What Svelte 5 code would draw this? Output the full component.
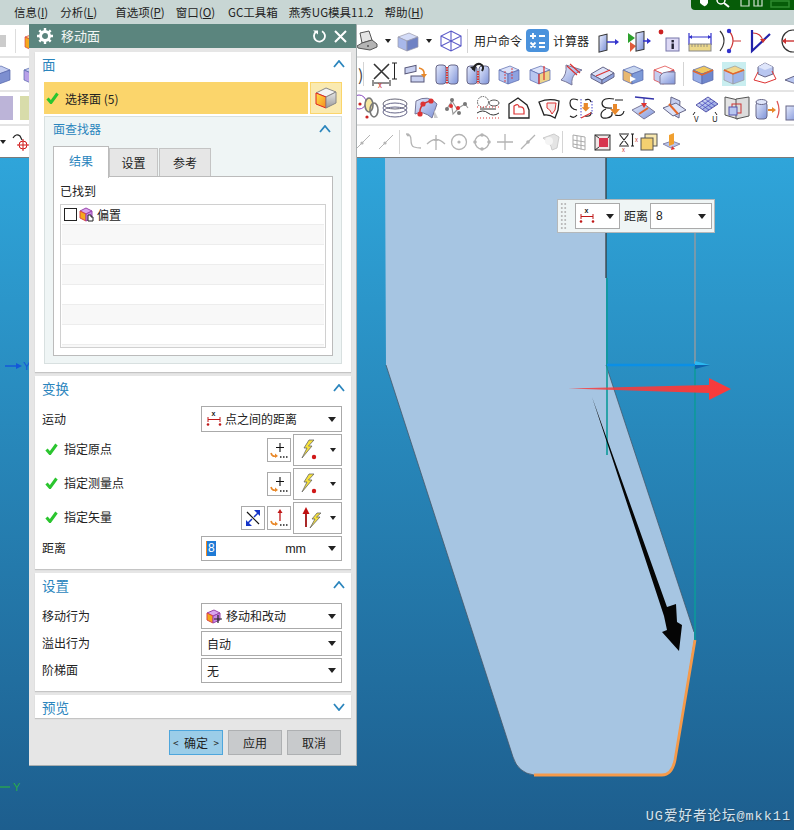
<script>
  const box = (l, t, r, s = '#5566aa') =>
    `<polygon points="2,8 13,4 22,8 11,12" fill="${t}" stroke="${s}" stroke-width=".7"/><polygon points="2,8 11,12 11,22 2,18" fill="${l}" stroke="${s}" stroke-width=".7"/><polygon points="11,12 22,8 22,18 11,22" fill="${r}" stroke="${s}" stroke-width=".7"/>`;
  const row1 = [
    `<rect x="3" y="5" width="8" height="16" fill="url(#gb)" stroke="#333" transform="skewY(-15) translate(0 3)"/><path d="M11 13h10" stroke="#33c" stroke-width="1.5"/><path d="M23 13l-4-3v6z" fill="#33c"/>`,
    `<path d="M1 4l7 5-7 5z" fill="#2ca02c"/><path d="M3 13l6 4-6 6z" fill="#e05a3a"/><rect x="9" y="3" width="8" height="18" fill="url(#gb)" stroke="#333" transform="skewY(-12) translate(0 3)"/><path d="M16 12h7" stroke="#33c" stroke-width="1.5"/><path d="M24 12l-4-3v6z" fill="#33c"/>`,
    `<circle cx="4" cy="3" r="2.4" fill="#c22"/><rect x="9" y="9" width="13" height="13" fill="#dcd8f4" stroke="#77a"/><rect x="14.5" y="11" width="2.4" height="2.4" fill="#223"/><rect x="14.5" y="14.5" width="2.4" height="5.5" fill="#223"/>`,
    `<path d="M1 4v12M23 4v12M1 8h22" stroke="#33c" stroke-width="1.2"/><path d="M1 8l3-2v4zM23 8l-3-2v4z" fill="#33c"/><rect x="1" y="15" width="22" height="7" fill="#ecd88a" stroke="#888"/><path d="M4 15v3M7 15v3M10 15v3M13 15v3M16 15v3M19 15v3" stroke="#777" stroke-width=".7"/>`,
    `<path d="M2 2q8 9 0 20" fill="none" stroke="#333" stroke-width="1.2"/><path d="M11 2q8 9 0 20" fill="none" stroke="#c33" stroke-width="1.2"/><circle cx="11" cy="2" r="2.2" fill="#33c"/><circle cx="11" cy="22" r="2.2" fill="#33c"/><path d="M15 12h8" stroke="#c33"/>`,
    `<path d="M3 1v21L21 5" fill="none" stroke="#22a" stroke-width="2.2"/><path d="M4 4q8 0 10 8" fill="none" stroke="#c33" stroke-width="1.2"/><path d="M14 14l-3-4h6z" fill="#c33"/>`,
    `<circle cx="14" cy="12" r="11" fill="none" stroke="#333" stroke-width="1.2"/><path d="M4 12h12" stroke="#c33" stroke-width="1.4"/><path d="M3 12l4-3v6z" fill="#c33"/>`
  ];
  const row2 = [
    `<rect x="1" y="3" width="11" height="6" fill="#c8d0f0" stroke="#557" transform="skewY(-12) translate(0 3)"/><rect x="7" y="14" width="13" height="6" fill="#c8d0f0" stroke="#557"/><path d="M15 6q6 1 5 7" fill="none" stroke="#e8882a" stroke-width="1.6"/><path d="M17 12h6l-3 4z" fill="#e8882a"/>`,
    `<rect x="1" y="3" width="10" height="19" rx="3" fill="url(#gb)" stroke="#668"/><rect x="13" y="3" width="10" height="19" rx="3" fill="url(#gb)" stroke="#668"/><path d="M12 5v17" stroke="#d33" stroke-width="2" stroke-dasharray="1.5 1"/>`,
    `<rect x="1" y="4" width="10" height="18" rx="3" fill="url(#gb)" stroke="#668"/><rect x="13" y="4" width="10" height="18" rx="3" fill="url(#gb)" stroke="#668"/><path d="M12 9v13" stroke="#d33" stroke-width="2" stroke-dasharray="1.5 1"/><path d="M7 8q2-7 7-6 5 2 2 7" fill="none" stroke="#222" stroke-width="2"/><path d="M4 5l6-1-1 6z" fill="#222"/>`,
    box('#b8c6f0', '#dce3fa', '#8ea2e0') + `<path d="M8 9v12M15 6v12" stroke="#d33" stroke-width=".9" stroke-dasharray="2 1"/>`,
    box('#b8c6f0', '#dce3fa', '#ecd48a') + `<path d="M11 12v10M16 4v14" stroke="#d33" stroke-width="1.2"/>`,
    `<path d="M7 3l16 5-7 4q-4 4-3 11Q6 19 2 18q6-5 5-15z" fill="url(#gb)" stroke="#779"/><path d="M8 4l10 9M11 2l10 9" stroke="#d33" stroke-width="1.2"/>`,
    `<polygon points="1,12 13,5 24,11 12,18" fill="#dde3f8" stroke="#668"/><polygon points="1,12 12,18 12,22 1,16" fill="#a8b8e8" stroke="#668"/><polygon points="12,18 24,11 24,15 12,22" fill="#8ea2dd" stroke="#668"/><path d="M6 14l14-6" stroke="#d33" stroke-width="1.2"/>`,
    box('#e8b870', '#c8d6f0', '#7d9ad8') + `<path d="M9 14l6 3-6 3z" fill="#fff"/>`,
    box('#c4cdf0', '#fff', '#7d8fd0', '#d33') + `<path d="M8 22V14q2-4 7-4h8v12z" fill="url(#gb)" stroke="#779"/>`,
    null,
    box('#98aee8', '#f0c860', '#6f87cc') + `<path d="M2 9l9 4 11-5" fill="none" stroke="#e5672a" stroke-width="1.5"/>`,
    `<rect width="24" height="24" y="0" fill="#c9eef0"/>` + box('#b8c6f0', '#f0d890', '#9cb4e8', '#999') + `<path d="M2 8l9 4 11-4" fill="none" stroke="#e5672a" stroke-width="1.5"/>`,
    `<polygon points="12,1 20,5 20,12 12,15 5,12 5,5" fill="#b8c6f0" stroke="#668"/><path d="M5 10L1 18l11 3 11-4-4-8" fill="none" stroke="#d33"/><polygon points="12,1 20,5 12,8 5,5" fill="#dfe6fb"/>`,
    `<polygon points="1,18 13,13 24,16 12,22" fill="#b8c6f0" stroke="#668"/><path d="M14 5l-3 12 8-3z" fill="#f0a030"/>`
  ];
  const row3 = [
    `<ellipse cx="12" cy="8" rx="12" ry="5" fill="none" stroke="#667"/><ellipse cx="12" cy="12" rx="12" ry="5" fill="none" stroke="#668"/><ellipse cx="12" cy="16" rx="12" ry="5" fill="none" stroke="#668"/>`,
    `<path d="M2 5q12-7 21 3l-5 14Q9 14 1 18z" fill="url(#gb)" stroke="#779"/><path d="M20 22h4l-4-8z" fill="#ccc"/><path d="M6 18Q5 7 17 5" fill="none" stroke="#c33" stroke-width="1.4"/><circle cx="6" cy="18" r="2.6" fill="#d33"/><circle cx="9" cy="8" r="2.6" fill="#d33"/><circle cx="17" cy="5" r="2.6" fill="#d33"/>`,
    `<path d="M1 14L7 5l5 8 8-5 3 4M6 6l2 12 5-5" fill="none" stroke="#999" stroke-width="1.1"/><circle cx="7" cy="4" r="2" fill="#777"/><circle cx="2" cy="13" r="2" fill="#777"/><circle cx="20" cy="8" r="2" fill="#777"/><circle cx="14" cy="17" r="2" fill="#777"/><circle cx="6" cy="10" r="2" fill="#d33"/><circle cx="13" cy="12" r="2" fill="#d33"/>`,
    `<circle cx="7" cy="6" r="5.5" fill="none" stroke="#555" stroke-dasharray="1.5 1"/><ellipse cx="18" cy="7" rx="5" ry="3" fill="none" stroke="#555"/><path d="M1 17q6-4 11 0t11 0M4 13h16" fill="none" stroke="#333"/><path d="M1 22h22M1 11h22" stroke="#d33" stroke-dasharray="1 2"/>`,
    `<path d="M2 8l9-6 9 7 2 5v8H2z" fill="none" stroke="#222" stroke-width="1.3"/><path d="M7 10q5-3 5 1 5-1 5 4v3H7z" fill="none" stroke="#d33" stroke-width="1.2"/>`,
    `<path d="M1 6q10-4 20-1l-1 9-3 8q-6-4-11-3z" fill="none" stroke="#222" stroke-width="1.3"/><path d="M9 7h9l-1 7-3 4q-2-5-5-6z" fill="#f6e6e6" stroke="#d33"/>`,
    `<path d="M9 4Q1 1 1 7t7 7M16 20q7 1 6-4M16 4q5-2 6 2M1 20q4 3 7-1" fill="none" stroke="#222" stroke-width="1.2"/><path d="M12 3v19M23 5v13" stroke="#44c" stroke-dasharray="1.5 1.5"/><path d="M12 22l10-5" stroke="#d33" stroke-width="1.2"/><path d="M15 7h6v6h3l-6 6-6-6h3z" fill="#e8882a" transform="scale(.7) translate(6 3)"/>`,
    `<path d="M14 3Q3 1 2 7q0 6 10 5M15 4h8M6 13Q1 15 1 19t6 3q6-1 5-6m3 3q8 2 9-4" fill="none" stroke="#222" stroke-width="1.2"/><path d="M13 8h4v5h3l-5 6-5-6h3z" fill="#e8882a"/>`,
    `<path d="M4 1l19 2" stroke="#33a" stroke-width="1.5"/><path d="M13 2v10" stroke="#33a"/><path d="M1 14l12-6 11 8-11 7z" fill="url(#gb)" stroke="#779"/><path d="M8 18l9-6" stroke="#e5672a" stroke-width="2"/><path d="M10 7h6l-3 5z" fill="#d33"/>`,
    `<polygon points="9,1 18,5 17,22 8,17" fill="#c4cdf0" stroke="#668"/><polygon points="1,12 14,7 24,14 11,20" fill="#dbe2f8" stroke="#668"/><path d="M7 8l9 10" stroke="#e5672a" stroke-width="2"/>`,
    `<polygon points="3,9 15,1 25,8 13,16" fill="url(#gb)" stroke="#55a"/><path d="M6 7l10 7M9 5l10 7M12 3l10 7M7 11l11-8M10 13l12-8" stroke="#44b" stroke-width=".7"/><path d="M2 16l-2 3M22 16l2 3" stroke="#222"/><text x="1" y="26" font-size="8" fill="#222">V</text><text x="19" y="26" font-size="8" fill="#222">U</text>`,
    `<polygon points="1,1 14,4 14,23 1,19" fill="#e4e4e4" stroke="#555"/><polygon points="12,3 25,1 25,20 12,23" fill="#dcdcdc" stroke="#555"/><rect x="8" y="8" width="9" height="9" fill="none" stroke="#c33"/><rect x="5" y="11" width="8" height="8" fill="#b8c6f0" stroke="#55a"/>`,
    `<rect x="1" y="6" width="11" height="17" rx="3" fill="url(#gb)" stroke="#668"/><ellipse cx="6.5" cy="6" rx="5.5" ry="2.5" fill="#dfe6fb" stroke="#668"/><path d="M13 14h6" stroke="#e8882a" stroke-width="2"/><path d="M21 14l-4-3v6z" fill="#e8882a"/><path d="M22 5q4 9 0 17" fill="none" stroke="#d55" stroke-width="1.3"/>`,
    `<rect x="0" y="10" width="12" height="14" fill="url(#gb)" stroke="#668"/>`
  ];
  const g = '#b4b4b4';
  const row4 = [
    `<path d="M3 17L17 3" stroke="${g}"/><circle cx="9" cy="11" r="1.6" fill="${g}"/>`,
    `<path d="M3 17L17 3" stroke="${g}"/><circle cx="9" cy="11" r="1.6" fill="${g}"/>`,
    null,
    `<path d="M3 2q5 0 5 6t3 7 7 1" fill="none" stroke="${g}" stroke-width="1.3"/><circle cx="5" cy="3" r="1.4" fill="${g}"/>`,
    `<path d="M1 12q9-9 18 0M10 3v15" fill="none" stroke="${g}" stroke-width="1.3"/><path d="M10 6l-2 3h4z" fill="${g}"/>`,
    `<circle cx="10" cy="10" r="7.5" fill="none" stroke="${g}" stroke-width="1.3"/><circle cx="10" cy="10" r="1.6" fill="${g}"/>`,
    `<circle cx="10" cy="10" r="7" fill="none" stroke="${g}" stroke-width="1.3"/><circle cx="10" cy="3" r="1.8" fill="${g}"/><circle cx="10" cy="17" r="1.8" fill="${g}"/><circle cx="3" cy="10" r="1.8" fill="${g}"/><circle cx="17" cy="10" r="1.8" fill="${g}"/>`,
    `<path d="M10 2v16M2 10h16" stroke="${g}" stroke-width="1.3"/>`,
    `<path d="M3 17L17 3" stroke="${g}" stroke-width="1.2"/><circle cx="10" cy="10" r="1.8" fill="${g}"/>`,
    `<path d="M2 6l11-4 5 3-2 11-5 2q-1-7-9-12z" fill="#e4e4e4" stroke="#ccc"/><circle cx="8" cy="9" r="4" fill="#f4f4f4"/>`
  ];
  const row4b = [
    `<path d="M3 3l12 2v13L3 15zM7 4v13M11 4.500v13M3 8l12 2M3 12l12 2" fill="none" stroke="#aaa"/>`,
    `<rect x="2" y="3" width="15" height="15" fill="#f0e6e6" stroke="#333"/><path d="M6 6h9v9H6z" fill="#d8344e"/><path d="M2 3l4 3M17 3l-2 3M2 18l4-3" stroke="#333"/>`,
    `<path d="M3 2h10M3 14h10M4 3l8 10M12 3l-8 10M15 2h3M16.500 2v12M15 14h3" stroke="#222" stroke-width="1.100"/><text x="19" y="10" font-size="6" fill="#c33">x</text><text x="6" y="20" font-size="6" fill="#c33">x</text>`,
    `<rect x="6" y="2" width="12" height="12" fill="#f8e8b0" stroke="#555"/><rect x="2" y="6" width="12" height="12" fill="#f4d070" stroke="#555"/>`,
    `<polygon points="1,12 10,9 18,12 9,16" fill="#b8c6f0" stroke="#88a"/><path d="M7 3l5-2v11l-5 2z" fill="#f0a030"/><path d="M10 14l3 3-4 1z" fill="#d33"/>`
  ];
  const menu = [
    ['信息(', 'I', ')', 12], ['分析(', 'L', ')', 18], ['首选项(', 'P', ')', 11], ['窗口(', 'O', ')', 13],
    ['GC工具箱', '', '', 11], ['燕秀UG模具11.2', '', '', 11], ['帮助(', 'H', ')', 13]
  ];
  const stripes = [0, 1, 2, 3, 4, 5, 6];
</script>

{#snippet check()}
  <svg class="check" width="13" height="12" viewBox="0 0 13 12"><path d="M1.500 6.500L5 10.500 11.500 1.500" fill="none" stroke="#2bc52f" stroke-width="3"/></svg>
{/snippet}
{#snippet chev(down)}
  <svg class="chev" width="12" height="8" viewBox="0 0 12 8"><path d={down ? 'M1 1l5 6 5-6' : 'M1 7l5-6 5 6'} fill="none" stroke="#2b85bd" stroke-width="1.800"/></svg>
{/snippet}
{#snippet dist()}
  <svg width="17" height="16" viewBox="0 0 17 16"><text x="5.500" y="5" font-size="7" font-weight="700" fill="#222" font-family="Liberation Sans">x</text><path d="M2 6v5M14 6v5M2 8.500h12" stroke="#c01818" stroke-width="1"/><circle cx="2" cy="13.500" r="1.300" fill="#c01818"/><circle cx="14" cy="13.500" r="1.300" fill="#c01818"/></svg>
{/snippet}
{#snippet caret()}<i class="caret"></i>{/snippet}
{#snippet moveIcon()}
  <svg width="16" height="15" viewBox="0 0 16 15"><polygon points="1,4 8,1 14,4 7,7" fill="#d9a6ee" stroke="#94a"/><polygon points="1,4 7,7 7,14 1,11" fill="#f4a81c" stroke="#d44"/><polygon points="7,7 14,4 14,11 7,14" fill="#c98ae6" stroke="#94a"/><path d="M8 10h8M12 6v8" stroke="#222" stroke-width="1.200"/></svg>
{/snippet}
{#snippet snap()}
  <button class="mini"><svg width="20" height="20" viewBox="0 0 20 20"><path d="M11 3v9M7 7.500h8" stroke="#111" stroke-width="1.100"/><path d="M2 13q1 4 5 3" fill="none" stroke="#e8882a" stroke-width="1.600"/><path d="M6 13.500l3 2.500-3 2z" fill="#e8882a"/><path d="M11 17h1.500M14 17h1.500M17 17h1.500" stroke="#222" stroke-width="1.600"/></svg></button>
{/snippet}
{#snippet snapUp()}
  <button class="mini"><svg width="20" height="20" viewBox="0 0 20 20"><path d="M11 4v9" stroke="#c01818" stroke-width="1.300"/><path d="M11 1l-2.500 4h5z" fill="#c01818"/><path d="M2 13q1 4 5 3" fill="none" stroke="#e8882a" stroke-width="1.600"/><path d="M6 13.500l3 2.500-3 2z" fill="#e8882a"/><path d="M11 17h1.500M14 17h1.500M17 17h1.500" stroke="#222" stroke-width="1.600"/></svg></button>
{/snippet}
{#snippet bolt(kind)}
  <div class="big">
    <svg width="22" height="22" viewBox="0 0 22 22">
      {#if kind === 'pt'}
        <path d="M9 1L4 9l3 0-5 10 10-12-3.500 0L14 1z" fill="#f7e23a" stroke="#666" stroke-width=".8"/>
        <circle cx="14" cy="18" r="2.200" fill="#d01818"/>
      {:else}
        <path d="M6 5v15" stroke="#a01010" stroke-width="1.800"/><path d="M6 0L2.500 7h7z" fill="#c01010"/>
        <path d="M17 6l-5 6 3 0-5 9 10-11-3.500 0L21 6z" fill="#f7e23a" stroke="#666" stroke-width=".8"/>
      {/if}
    </svg>
    <i class="caret small"></i>
  </div>
{/snippet}
{#snippet cells(list, size)}
  {#each list as icon}
    {#if icon === null}
      <span class="sep"></span>
    {:else}
      <svg class="ic" width={size} height={size} viewBox="0 0 {size} {size}">{@html icon}</svg>
    {/if}
  {/each}
{/snippet}

<svg class="defs" width="0" height="0"><defs>
  <linearGradient id="gb" x1="0" y1="0" x2="1" y2="1"><stop offset="0" stop-color="#e6ebfc"/><stop offset="1" stop-color="#7d92d8"/></linearGradient>
  <linearGradient id="gy" x1="0" y1="0" x2="1" y2="1"><stop offset="0" stop-color="#ffe24a"/><stop offset="1" stop-color="#f58a1c"/></linearGradient>
  <linearGradient id="gw" x1="0" y1="0" x2="0" y2="1"><stop offset="0" stop-color="#e8e8e8"/><stop offset="1" stop-color="#999"/></linearGradient>
  <linearGradient id="gbg" x1="0" y1="0" x2="0" y2="1"><stop offset="0" stop-color="#2fa5da"/><stop offset="1" stop-color="#1d5e8e"/></linearGradient>
  <linearGradient id="gred" x1="0" y1="0" x2="1" y2="0"><stop offset="0" stop-color="#f63a3a" stop-opacity=".8"/><stop offset="1" stop-color="#fb3a3a"/></linearGradient>
</defs></svg>

<div class="page">
  <header class="menubar">
    {#each menu as m}
      <span class="m" style="margin-right:{m[3]}px">{m[0]}{#if m[1]}<u>{m[1]}</u>{/if}{m[2]}</span>
    {/each}
    <div class="green">
      <svg width="103" height="10" viewBox="0 0 103 10">
        <path d="M9 0h8v3q-2 4-4 3t-4-3z" fill="#fff"/>
        <circle cx="30" cy="0" r="4" fill="none" stroke="#fff" stroke-width="1.500"/><path d="M33 3l5 4" stroke="#fff" stroke-width="2"/>
        <path d="M50 0v6h8V0M63 0v6h8V0M67 0v6" fill="none" stroke="#cfe0cf" stroke-width="1.200"/>
        <path d="M80 1h18v6H80z" fill="none" stroke="#2f8a2f" stroke-width="1.500"/>
      </svg>
    </div>
  </header>

  <section class="ribbon">
    <div class="row r1">
      <div class="lead">
        <span class="graybit"></span><span class="vsep"></span>
        <svg class="ic" width="24" height="24" viewBox="0 0 24 24">{@html box('#f4a81c', '#f7d88a', '#dfae50', '#d44')}</svg>
      </div>
      <svg class="ic" width="24" height="24" viewBox="0 0 24 24"><path d="M7 14L5 4l9-2 3 9z" fill="#e4e4e4" stroke="#555"/><path d="M2 17l5-3 10-3 5 4v3l-7 3-12-2z" fill="#b4b4b4" stroke="#555"/><circle cx="13" cy="17" r="1" fill="#555"/></svg>
      <i class="caret tb"></i>
      <svg class="ic" width="24" height="24" viewBox="0 0 24 24">{@html box('#a8b8ea', '#d4dcf8', '#6f82c4', '#99a')}</svg>
      <i class="caret tb"></i>
      <svg class="ic wire" width="24" height="24" viewBox="0 0 24 24"><path d="M12 2l10 5v10l-10 5-10-5V7zM2 7l10 5 10-5M12 12v10M12 2v10M2 17l10-5 10 5" fill="none" stroke="#5a5ac8" stroke-width="1.100"/></svg>
      <span class="sep s1"></span>
      <span class="cmd">用户命令</span>
      <svg class="calc" width="23" height="23" viewBox="0 0 23 23"><rect width="23" height="23" rx="4" fill="#4a92dc"/><path d="M4 7h6M7 4v6M13 7h6M4.500 13.500l5 5M9.500 13.500l-5 5M13 14h6M13 18h6" stroke="#fff" stroke-width="1.800"/></svg>
      <span class="cmd calcl">计算器</span>
      <div class="icons">{@render cells(row1, 24)}</div>
    </div>
    <div class="row r2">
      <div class="lead">
        <svg class="ic lcube" width="24" height="24" viewBox="0 0 24 24">{@html box('#f4a81c', '#c4cdf0', '#7d8fd0')}</svg>
        <svg class="ic" width="24" height="24" viewBox="0 0 24 24">{@html box('#b8a0e8', '#c4cdf0', '#7d8fd0')}</svg>
      </div>
      <span class="paren">)</span>
      <span class="sep s2"></span>
      <svg class="ic x" width="26" height="26" viewBox="0 0 26 26"><path d="M2 3l15 15M17 3L2 18" stroke="#333" stroke-width="1.600"/><path d="M2 22h15M1 19v6M18 19v6M20 2h5M22.500 2v16M20 18h5" stroke="#222"/><text x="6" y="27" font-size="8" fill="#c33">x</text></svg>
      <div class="icons">{@render cells(row2, 24)}</div>
    </div>
    <div class="row r3">
      <div class="lead">
        <span class="swatch purple"></span><span class="swatch olive"></span>
      </div>
      <svg class="ic chain" width="24" height="24" viewBox="0 0 24 24"><circle cx="3" cy="6" r="7" fill="none" stroke="#8a4ac0"/><ellipse cx="13" cy="9" rx="4" ry="7" fill="#f6e7a0" stroke="#777" stroke-width="1.600"/><ellipse cx="18" cy="14" rx="4" ry="7" fill="none" stroke="#777" stroke-width="1.600"/><circle cx="4" cy="8" r="1.600" fill="#c22"/><circle cx="11" cy="21" r="1.600" fill="#c22"/></svg>
      <div class="icons">{@render cells(row3, 24)}</div>
    </div>
    <div class="row r4">
      <div class="lead">
        <i class="caret tb l"></i>
        <svg class="ic" width="18" height="20" viewBox="0 0 18 20"><path d="M1 6q3-5 7-2l2 4" fill="none" stroke="#222" stroke-width="1.200"/><circle cx="11" cy="13" r="4" fill="none" stroke="#d01818"/><path d="M11 7v12M5 13h12" stroke="#d01818"/></svg>
      </div>
      <div class="icons">{@render cells(row4, 20)}<span class="sep s4"></span>{@render cells(row4b, 20)}</div>
    </div>
  </section>

  <main class="view">
    <svg class="scene" width="794" height="672" viewBox="0 158 794 672">
      <rect x="0" y="158" width="794" height="672" fill="url(#gbg)"/>
      <path d="M385 158H606V365L694 632V640L675 760Q672 775 660 775H534Q518 773 513 757L386 365Z" fill="#a6c5e2"/>
      <path d="M606 158V278" stroke="#333" stroke-width="1.200"/>
      <path d="M606 365L694 632M386 365L513 757Q518 773 534 775" fill="none" stroke="#46586a" stroke-width=".8"/>
      <path d="M607 278V455M695 365V640" stroke="#0d9a9a" stroke-width="1.600"/>
      <path d="M695 233V365" stroke="#8a9aa4" stroke-width="1.600"/>
      <path d="M607 365H696" stroke="#0a8fe6" stroke-width="2.400"/>
      <path d="M695 361l15 4h-15z" fill="#2cb8f0"/>
      <path d="M695 365h15l-15 4z" fill="#0e62ac"/>
      <path d="M534 775H662Q672 775 675 760L695 640" fill="none" stroke="#f59a4a" stroke-width="2.800"/>
      <path d="M568 388.500L709 385V378L731 389 709 400V393Z" fill="url(#gred)"/>
      <path d="M592 397L667 607 676 604 677 622 682 625 679 651 662 632 667 630 664 616Z" fill="#050505"/>
      <path d="M5 366h15" stroke="#1458d8" stroke-width="1.500"/><path d="M22 366l-6-3v6z" fill="#1458d8"/>
      <text x="23" y="370" font-size="11" fill="#1458d8" font-family="Liberation Sans">Y</text>
      <path d="M0 787h10" stroke="#2aaa4a" stroke-width="1.300"/>
      <text x="13" y="791" font-size="11" fill="#2aaa4a" font-family="Liberation Sans">Y</text>
    </svg>
    <div class="watermark">UG爱好者论坛@mkk11</div>
    <div class="float">
      <span class="dots"></span>
      <div class="fsel">{@render dist()}{@render caret()}</div>
      <span class="flabel">距离</span>
      <div class="finput"><span>8</span>{@render caret()}</div>
    </div>
  </main>

  <div class="dialog">
    <div class="title">
      <svg width="16" height="16" viewBox="0 0 16 16"><circle cx="8" cy="8" r="4.500" fill="none" stroke="#fff" stroke-width="3"/><path d="M8 0v3M8 13v3M0 8h3M13 8h3M2.300 2.300l2 2M11.700 11.700l2 2M2.300 13.700l2-2M11.700 4.300l2-2" stroke="#fff" stroke-width="2.400"/></svg>
      <span class="ttext">移动面</span>
      <svg class="reset" width="14" height="14" viewBox="0 0 14 14"><path d="M9 2.200A5.500 5.500 0 1 1 3 2.800" fill="none" stroke="#fff" stroke-width="1.800"/><path d="M0 1.500l5 0 0 4z" fill="#fff"/></svg>
      <svg width="13" height="13" viewBox="0 0 13 13"><path d="M1 1l11 11M12 1L1 12" stroke="#fff" stroke-width="2"/></svg>
    </div>
    <div class="dbody">
      <section class="panel p1">
        <div class="phead"><span>面</span>{@render chev(false)}</div>
        <div class="selrow">
          <div class="selmain">{@render check()}<span>选择面 (5)</span></div>
          <div class="selbtn">
            <svg width="22" height="22" viewBox="0 0 22 22"><polygon points="1,6 11,1 21,5 11,10" fill="#f4f4f4" stroke="#888"/><polygon points="1,6 11,10 11,21 1,17" fill="url(#gy)" stroke="#e02020"/><polygon points="11,10 21,5 21,16 11,21" fill="url(#gw)" stroke="#888"/></svg>
          </div>
        </div>
        <div class="finder">
          <div class="fhead"><span>面查找器</span>{@render chev(false)}</div>
          <div class="tabs">
            <span class="tab on">结果</span>
            <span class="tab">设置</span>
            <span class="tab t3">参考</span>
          </div>
          <div class="pane">
            <div class="found">已找到</div>
            <div class="list">
              <div class="lrow first">
                <span class="cb"></span>
                <svg width="16" height="15" viewBox="0 0 16 15"><polygon points="1,4 7,1 13,4 7,7" fill="#d9a6ee" stroke="#94a"/><polygon points="1,4 7,7 7,14 1,11" fill="#f4a81c" stroke="#d44"/><polygon points="7,7 13,4 13,11 7,14" fill="#c98ae6" stroke="#94a"/><path d="M9 8h3v2h2v4H9z" fill="#fff" stroke="#222"/></svg>
                <span>偏置</span>
              </div>
              {#each stripes as s}
                <div class="lrow" class:alt={s % 2 === 0}></div>
              {/each}
            </div>
          </div>
        </div>
      </section>

      <section class="panel">
        <div class="phead"><span>变换</span>{@render chev(false)}</div>
        <div class="rows">
          <div class="frow h26"><span class="lab">运动</span><div class="sel">{@render dist()}<span class="v">点之间的距离</span>{@render caret()}</div></div>
          <div class="frow h32"><span class="lab c">{@render check()}指定原点</span><div class="tools">{@render snap()}{@render bolt('pt')}</div></div>
          <div class="frow h32"><span class="lab c">{@render check()}指定测量点</span><div class="tools">{@render snap()}{@render bolt('pt')}</div></div>
          <div class="frow h32"><span class="lab c">{@render check()}指定矢量</span><div class="tools">
            <button class="mini"><svg width="20" height="20" viewBox="0 0 20 20"><path d="M4 4l12 12" stroke="#111" stroke-width="1.200"/><path d="M11 9l5-5M4 16l5-5" stroke="#1434c8" stroke-width="1.500"/><path d="M17 2v6l-6-6zM3 18v-6l6 6z" fill="#1434c8"/></svg></button>
            {@render snapUp()}{@render bolt('vec')}</div></div>
          <div class="frow h25"><span class="lab">距离</span><div class="sel input"><span class="hl">8</span><span class="unit">mm</span>{@render caret()}</div></div>
        </div>
      </section>

      <section class="panel">
        <div class="phead"><span>设置</span>{@render chev(false)}</div>
        <div class="rows tight">
          <div class="frow h26"><span class="lab">移动行为</span><div class="sel">{@render moveIcon()}<span class="v mv">移动和改动</span>{@render caret()}</div></div>
          <div class="frow h25"><span class="lab">溢出行为</span><div class="sel"><span class="v n">自动</span>{@render caret()}</div></div>
          <div class="frow h25"><span class="lab">阶梯面</span><div class="sel"><span class="v n">无</span>{@render caret()}</div></div>
        </div>
      </section>

      <section class="panel last">
        <div class="phead small"><span>预览</span>{@render chev(true)}</div>
      </section>

      <div class="actions">
        <button class="act ok"><span class="ang">&lt;</span>确定<span class="ang">&gt;</span></button>
        <button class="act">应用</button>
        <button class="act">取消</button>
      </div>
    </div>
  </div>
</div>

<style>
  :global(body) { margin: 0; }
  .defs { position: absolute; }
  .page {
    position: relative;
    width: 794px;
    height: 830px;
    overflow: hidden;
    font-family: "Noto Sans CJK SC", "Liberation Sans", sans-serif;
    font-size: 12px;
    color: #222;
    background: #fff;
  }
  .menubar {
    position: relative;
    height: 25px;
    box-sizing: border-box;
    padding: 0 0 1px 14px;
    background: #c8d6d4;
    display: flex;
    align-items: center;
    font-size: 11.5px;
    line-height: 16px;
    white-space: nowrap;
  }
  .green {
    position: absolute;
    top: 0;
    right: 0;
    width: 103px;
    height: 10px;
    background: #065c08;
    border-radius: 0 0 0 4px;
    line-height: 0;
  }
  .ribbon { height: 133px; background: #fff; border-bottom: 1px solid #7b7b7b; box-sizing: border-box; }
  .row {
    display: flex;
    align-items: center;
    height: 34px;
    box-sizing: border-box;
    border-bottom: 2px solid #e4e4e4;
    overflow: hidden;
    white-space: nowrap;
  }
  .r1 { height: 33px; }
  .r4 { height: 32px; border-bottom: 0; }
  .lead { flex: none; display: flex; align-items: center; }
  .r1 .lead { width: 355px; }
  .r2 .lead { width: 358px; }
  .r3 .lead { width: 356px; }
  .r4 .lead { width: 353px; }
  .graybit { width: 6px; height: 12px; background: #ccc; }
  .vsep { width: 1px; height: 24px; background: #ddd; margin: 0 7px 0 9px; }
  .lcube { margin: 0 10px 0 -12px; }
  .swatch { display: block; height: 24px; }
  .purple { width: 13px; background: #bcb4d8; margin-right: 7px; }
  .olive { width: 12px; background: #d8dcaa; }
  .ic { flex: none; overflow: visible; }
  .icons { display: flex; align-items: center; gap: 7px; flex: none; }
  .caret {
    display: inline-block;
    flex: none;
    width: 0;
    height: 0;
    border: 4px solid transparent;
    border-top: 5px solid #222;
    border-bottom: 0;
  }
  .caret.small { border-width: 3.5px; border-top-width: 4px; border-bottom: 0; }
  .caret.tb { margin: 0 5px 0 6px; border-width: 3.5px; border-top-width: 4px; border-bottom: 0; }
  .caret.tb.l { margin: 0 6px 0 0; }
  .wire { margin-left: 2px; }
  .sep { flex: none; width: 1px; height: 24px; background: #d4d4d4; }
  .s1 { margin: 0 6px 0 4px; }
  .cmd { font-size: 12px; color: #222; }
  .calc { margin: 0 4px 0 4px; flex: none; }
  .calcl { margin-right: 7px; }
  .r1 .icons { gap: 6.5px; }
  .paren { font-size: 16px; width: 8px; color: #444; }
  .s2 { margin-right: 8px; }
  .x { margin-right: 6px; }
  .chain { margin-right: 3px; }
  .r4 .icons { gap: 3px; }
  .s4 { margin: 0 4px 0 -2px; height: 22px; }

  .view { position: relative; height: 672px; }
  .scene { display: block; }
  .watermark {
    position: absolute;
    right: 3px;
    bottom: 4px;
    font-family: "Liberation Mono", "Noto Sans CJK SC", monospace;
    font-size: 13.500px;
    letter-spacing: 1px;
    line-height: 18px;
    color: #d6e4ee;
    text-shadow: 1px 1px 1px #2a4a66;
  }
  .float {
    position: absolute;
    left: 557px;
    top: 41px;
    width: 158px;
    height: 34px;
    box-sizing: border-box;
    border: 1px solid #b4b8ba;
    background: #eff5f5;
    display: flex;
    align-items: center;
    padding-left: 2px;
  }
  .dots {
    width: 7px;
    height: 28px;
    margin-right: 8px;
    background-image: radial-gradient(#bbb 1px, transparent 1.300px);
    background-size: 3.500px 4px;
  }
  .fsel {
    width: 45px;
    height: 26px;
    box-sizing: border-box;
    border: 1px solid #aaa;
    background: #fff;
    display: flex;
    align-items: center;
    justify-content: space-between;
    padding: 0 5px 0 3px;
  }
  .flabel { margin: 0 2px 0 4px; font-size: 12px; padding-bottom: 1px; }
  .finput {
    width: 62px;
    height: 26px;
    box-sizing: border-box;
    border: 1px solid #aaa;
    background: #fff;
    display: flex;
    align-items: center;
    justify-content: space-between;
    padding: 0 5px;
    font-family: "Liberation Sans", sans-serif;
    font-size: 12px;
  }

  .dialog {
    position: absolute;
    left: 29px;
    top: 24px;
    width: 328px;
    box-sizing: border-box;
    background: #e6e6e6;
    border-right: 1px solid #a8aeb0;
    border-bottom: 1px solid #a8aeb0;
  }
  .title {
    height: 24px;
    background: #5b857e;
    display: flex;
    align-items: center;
    padding: 0 9px 0 8px;
    color: #f2f6f5;
  }
  .ttext { flex: 1; margin-left: 8px; font-size: 13px; padding-bottom: 1px; }
  .reset { margin-right: 7px; }
  .dbody { padding: 4px 5px 9px 6px; display: flex; flex-direction: column; gap: 4px; }
  .panel { background: #fff; box-shadow: 0 1px 1px #c4c4c4; }
  .p1 { height: 320px; }
  .phead {
    height: 30px;
    display: flex;
    align-items: center;
    justify-content: space-between;
    padding: 0 6px 6px 7px;
    color: #2b85bd;
    font-size: 13.500px;
    box-sizing: border-box;
  }
  .phead.small { height: 23px; padding-bottom: 0; padding-top: 0; }
  .selrow { display: flex; gap: 2px; margin: 0 9px 0 9px; height: 32px; }
  .selmain {
    width: 264px;
    background: #fbd56b;
    display: flex;
    align-items: center;
    font-size: 12px;
    padding-left: 2px;
    box-sizing: border-box;
    white-space: pre;
  }
  .check { flex: none; margin-right: 6px; }
  .selbtn {
    width: 32px;
    box-sizing: border-box;
    background: #faeab0;
    border: 1px solid #fbd56b;
    display: flex;
    align-items: center;
    justify-content: center;
  }
  .finder {
    margin: 2px 9px 0;
    height: 248px;
    box-sizing: border-box;
    background: #eff5f5;
    border: 1px solid #d8e0e0;
    padding: 0 8px;
  }
  .fhead {
    height: 29px;
    display: flex;
    align-items: center;
    justify-content: space-between;
    padding: 0 2px 6px 0;
    box-sizing: border-box;
    color: #2b85bd;
    font-size: 12px;
  }
  .tabs { display: flex; height: 30px; align-items: flex-end; position: relative; z-index: 1; }
  .tab {
    width: 49px;
    height: 28px;
    box-sizing: border-box;
    border: 1px solid #c4c4c4;
    border-bottom: 0;
    background: #e6e6e6;
    display: flex;
    align-items: center;
    justify-content: center;
    margin-right: 1px;
    align-self: flex-start;
    margin-top: 2px;
  }
  .t3 { width: 52px; }
  .tab.on {
    width: 56px;
    height: 32px;
    margin-top: 0;
    background: #fff;
    color: #2b85bd;
    border-color: #bbb;
    padding-bottom: 4px;
    margin-right: 0;
  }
  .pane {
    height: 180px;
    box-sizing: border-box;
    border: 1px solid #bbb;
    background: #fff;
    padding: 0 6px;
  }
  .found { height: 27px; line-height: 28px; }
  .list { height: 144px; box-sizing: border-box; border: 1px solid #d0d0d0; overflow: hidden; padding: 0 1px; }
  .lrow { height: 20px; box-sizing: border-box; border-bottom: 1px solid #ededed; }
  .lrow.alt { background: #f8f8f8; }
  .lrow.first { display: flex; align-items: center; gap: 2px; padding-left: 2px; }
  .cb { width: 11px; height: 11px; border: 1px solid #222; background: #fff; flex: none; }

  .rows { display: flex; flex-direction: column; gap: 2px; padding: 0 9px 8px 7px; }
  .rows.tight { padding-bottom: 8px; }
  .frow { display: flex; align-items: center; justify-content: space-between; }
  .h26 { height: 26px; }
  .h25 { height: 25px; }
  .h32 { height: 32px; }
  .lab { display: flex; align-items: center; padding-bottom: 2px; }
  .lab.c { padding-left: 3px; padding-bottom: 3px; }
  .lab .check { margin-right: 6px; }
  .sel {
    width: 141px;
    height: 100%;
    box-sizing: border-box;
    border: 1px solid #aaa;
    background: #fff;
    display: flex;
    align-items: center;
    padding: 0 5px 0 4px;
    gap: 2px;
  }
  .sel .v { flex: 1; padding-bottom: 1px; }
  .sel .v.n { padding-left: 1px; }
  .sel .v.mv { padding-left: 2px; }
  .input .hl { background: #1e7ad6; color: #fff; border-left: 1px solid #f58a1c; font-family: "Liberation Sans", sans-serif; padding: 0 1px; line-height: 15px; }
  .input .unit { flex: 1; text-align: right; padding-right: 20px; font-family: "Liberation Sans", sans-serif; font-size: 12.500px; }
  .tools { display: flex; align-items: center; gap: 2px; height: 100%; }
  .mini {
    width: 24px;
    height: 24px;
    padding: 0;
    box-sizing: border-box;
    border: 1px solid #aaa;
    background: #fff;
    display: flex;
    align-items: center;
    justify-content: center;
  }
  .big {
    width: 49px;
    height: 100%;
    box-sizing: border-box;
    border: 1px solid #aaa;
    background: #fff;
    display: flex;
    align-items: center;
    justify-content: space-between;
    padding: 0 5px 0 6px;
  }
  .actions { display: flex; justify-content: flex-end; gap: 5px; padding: 8px 10px 1px 0; }
  .act {
    width: 54px;
    height: 25px;
    padding: 0;
    box-sizing: border-box;
    border: 1px solid #aeb0b2;
    background: #c8cacc;
    font: inherit;
    color: #222;
    display: flex;
    align-items: center;
    justify-content: center;
  }
  .act.ok { background: #9bcde8; border-color: #4ea6dc; justify-content: space-between; padding: 0 3px; }
  .ang { font-size: 10px; }
</style>
